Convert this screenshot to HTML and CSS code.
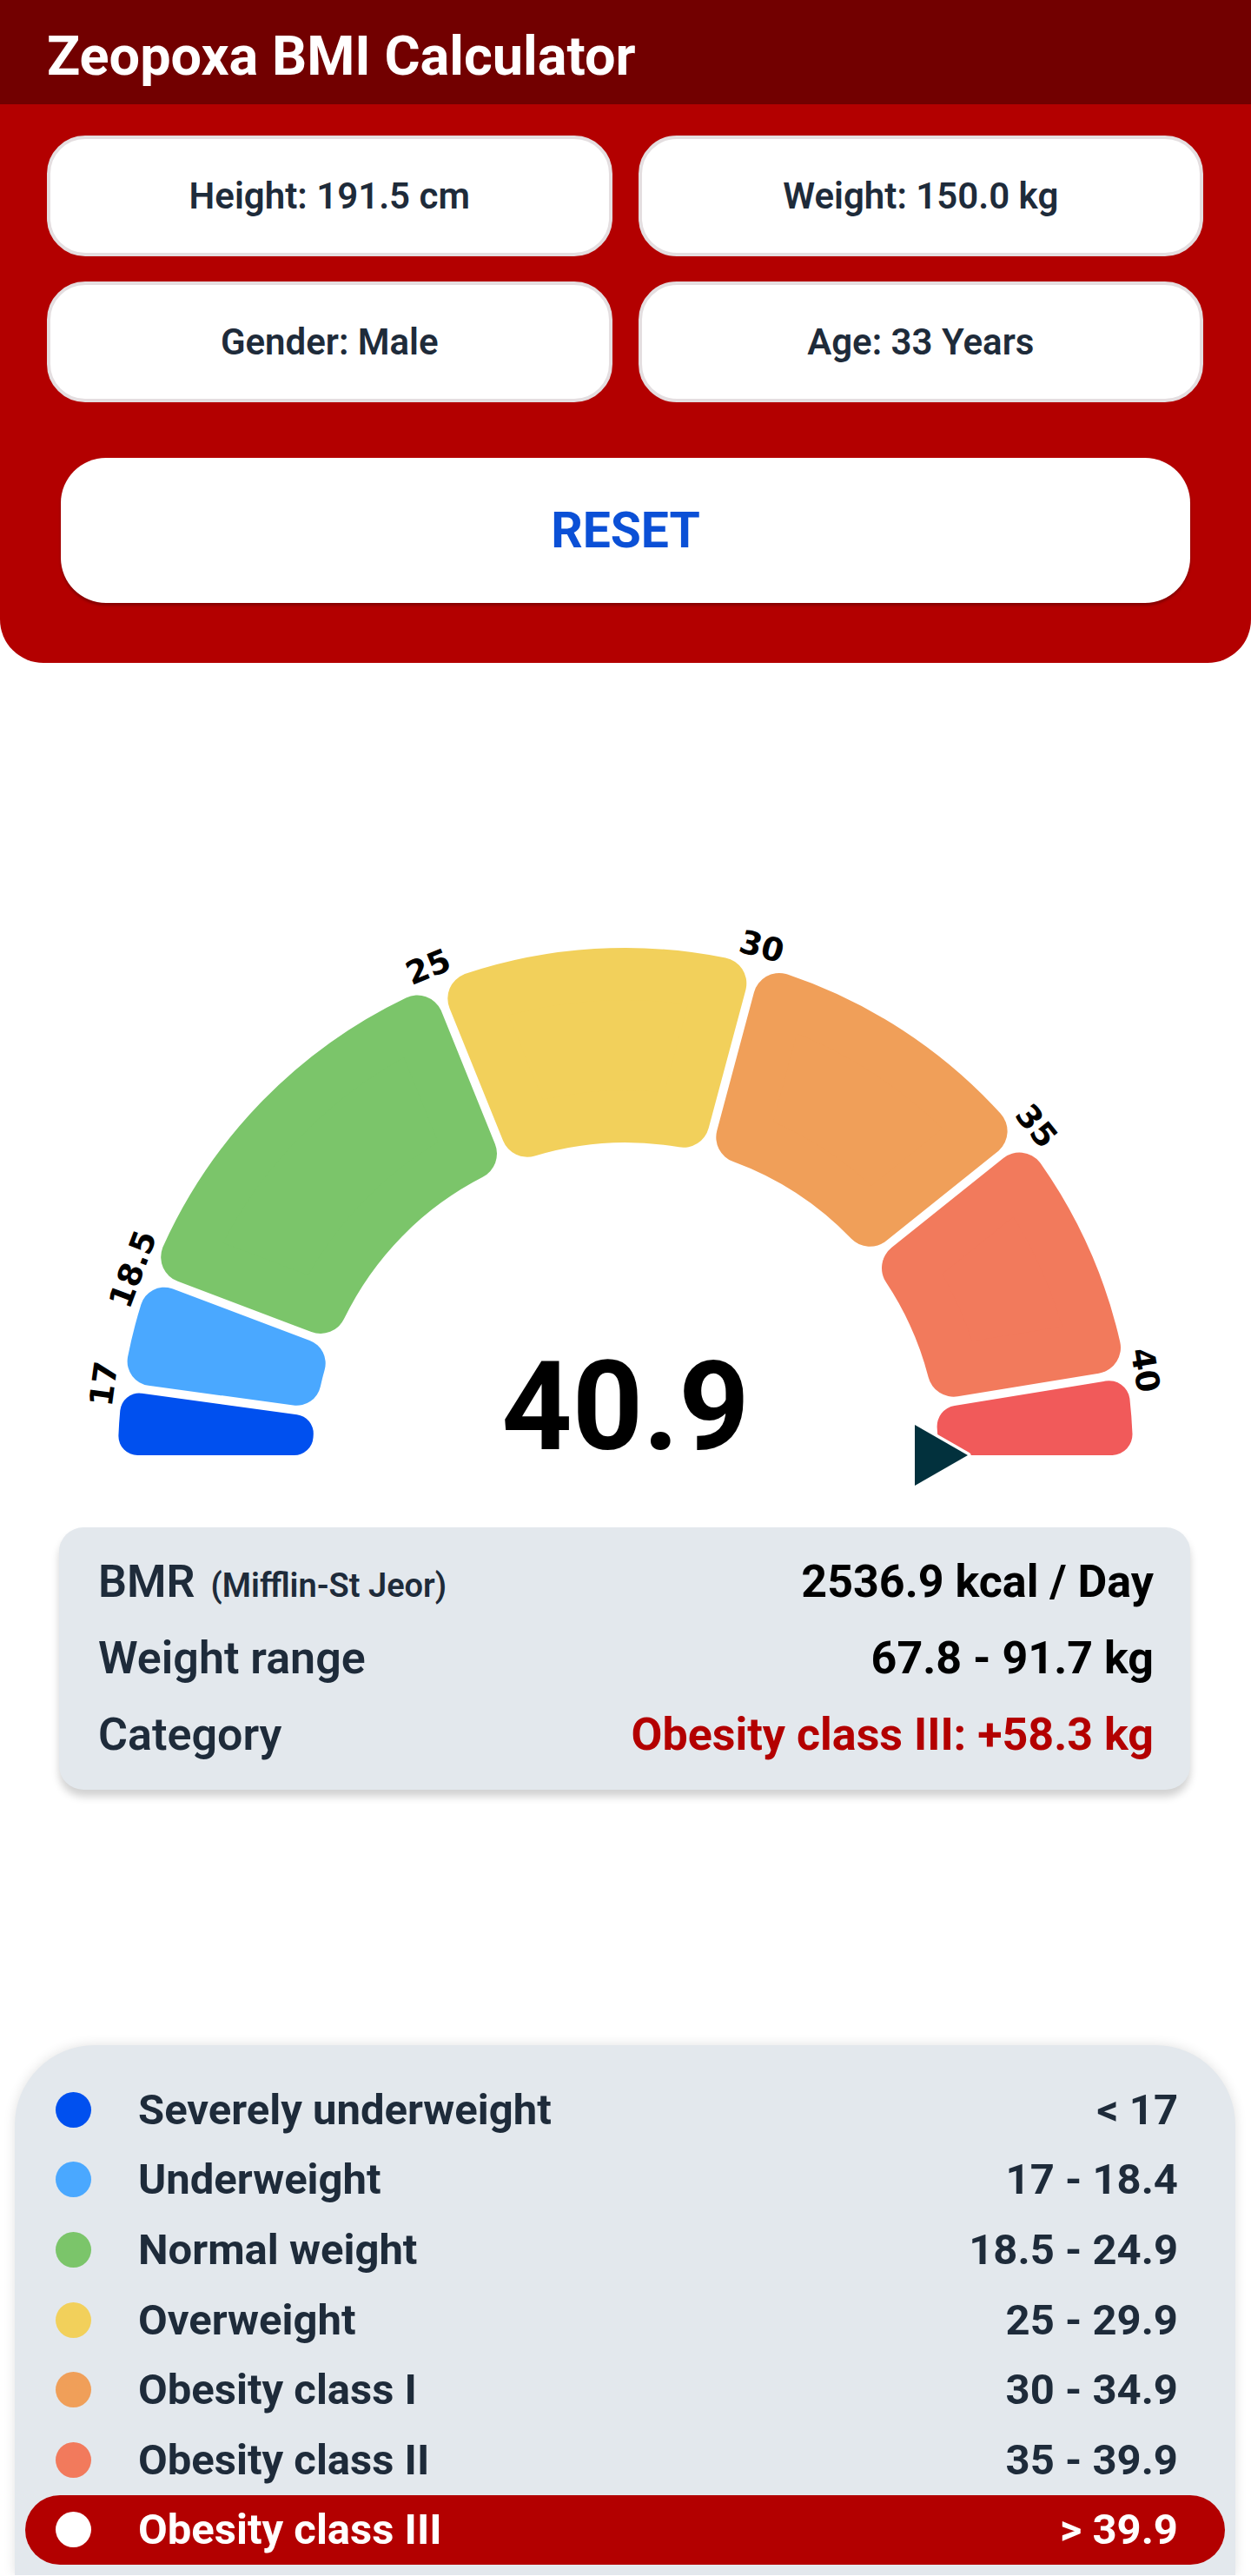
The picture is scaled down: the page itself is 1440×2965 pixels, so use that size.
FILE: index.html
```html
<!DOCTYPE html>
<html lang="en">
<head>
    <meta charset="UTF-8">
    <meta name="viewport" content="width=device-width, initial-scale=1.0">
    <title>Zeopoxa BMI Calculator</title>
    <link rel="stylesheet" href="styles.css">
</head>
<body>

    <header class="app-bar">
        <h1>Zeopoxa BMI Calculator</h1>
    </header>

    <!-- Inputs -->
    <section class="inputs">
        <div class="input-grid">
            <div class="field">Height: 191.5 cm</div>
            <div class="field">Weight: 150.0 kg</div>
            <div class="field">Gender: Male</div>
            <div class="field">Age: 33 Years</div>
        </div>
        <div class="reset">RESET</div>
    </section>

    <!-- Gauge, drawn in page coordinates -->
    <svg class="gauge" viewBox="0 763 1440 977" xmlns="http://www.w3.org/2000/svg">
        <g id="bands"></g>
        <g id="ticks"></g>
        <path class="pointer" d="M1053,1640 L1114,1675 L1053,1710 Z"/>
        <text class="bmi-value" x="720" y="1668">40.9</text>
    </svg>

    <!-- Results -->
    <div class="summary">
        <div class="summary-row">
            <span class="label">BMR<small>(Mifflin-St Jeor)</small></span>
            <span class="value">2536.9 kcal / Day</span>
        </div>
        <div class="summary-row">
            <span class="label">Weight range</span>
            <span class="value">67.8 - 91.7 kg</span>
        </div>
        <div class="summary-row">
            <span class="label">Category</span>
            <span class="value alert">Obesity class III: +58.3 kg</span>
        </div>
    </div>

    <!-- Legend -->
    <ul class="legend">
        <li><span class="dot severe"></span><span class="name">Severely underweight</span><span class="range">&lt; 17</span></li>
        <li><span class="dot under"></span><span class="name">Underweight</span><span class="range">17 - 18.4</span></li>
        <li><span class="dot normal"></span><span class="name">Normal weight</span><span class="range">18.5 - 24.9</span></li>
        <li><span class="dot over"></span><span class="name">Overweight</span><span class="range">25 - 29.9</span></li>
        <li><span class="dot ob1"></span><span class="name">Obesity class I</span><span class="range">30 - 34.9</span></li>
        <li><span class="dot ob2"></span><span class="name">Obesity class II</span><span class="range">35 - 39.9</span></li>
        <li class="current"><span class="dot"></span><span class="name">Obesity class III</span><span class="range">&gt; 39.9</span></li>
    </ul>

    <script src="script.js"></script>
</body>
</html>
```

FILE: styles.css
```css
/* Page */
body {
    margin: 0;
    font-family: Roboto, "Noto Sans", sans-serif;
    background-color: #fff;
    color: #1e2b3a;
}

/* Top bar */
.app-bar {
    height: 120px;
    box-sizing: border-box;
    padding: 8px 0 0 54px;
    background-color: #720000;
    display: flex;
    align-items: center;
}

.app-bar h1 {
    margin: 0;
    font-size: 63px;
    font-weight: 700;
    line-height: 1;
    color: #fff;
}

/* Input panel */
.inputs {
    background-color: #b30000;
    padding: 36px 55px 69px 54px;
    border-radius: 0 0 50px 50px;
}

.input-grid {
    display: grid;
    grid-template-columns: 1fr 1fr;
    gap: 29px 30px;
}

.field {
    height: 139px;
    box-sizing: border-box;
    background-color: #fff;
    border: 4px solid #e4dee0;
    border-radius: 44px;
    display: flex;
    align-items: center;
    justify-content: center;
    font-size: 42px;
    font-weight: 600;
}

.reset {
    margin: 64px 15px 0 16px;
    height: 167px;
    background-color: #fff;
    border-radius: 52px;
    box-shadow: 0 3px 3px rgba(0, 0, 0, 0.25);
    display: flex;
    align-items: center;
    justify-content: center;
    font-size: 57px;
    font-weight: 700;
    color: #0b50d6;
}

/* Gauge */
.gauge {
    display: block;
    width: 1440px;
    height: 977px;
}

.tick {
    font-family: "DejaVu Sans", sans-serif;
    font-size: 37px;
    font-weight: 700;
    fill: #000;
    text-anchor: middle;
    dominant-baseline: central;
}

.bmi-value {
    font-family: Roboto, sans-serif;
    font-size: 142px;
    font-weight: 700;
    fill: #000;
    text-anchor: middle;
}

.pointer {
    fill: #02313d;
    stroke: #fff;
    stroke-width: 7;
    stroke-linejoin: round;
    paint-order: stroke;
}

/* Result card */
.summary {
    margin: 18px 70px 0 68px;
    padding: 19px 42px 19px 45px;
    background-color: #e3e8ed;
    border-radius: 28px;
    box-shadow: 0 8px 10px rgba(0, 0, 0, 0.18);
}

.summary-row {
    display: flex;
    justify-content: space-between;
    align-items: baseline;
    height: 88px;
    line-height: 88px;
    font-size: 52px;
    font-weight: 600;
}

.summary-row small {
    margin-left: 18px;
    font-size: 38px;
    font-weight: 600;
}

.value {
    font-weight: 700;
    color: #000;
}

.value.alert {
    color: #b30000;
}

/* Legend */
.legend {
    list-style: none;
    margin: 294px 18px 0 17px;
    padding: 34px 12px 12px;
    background-color: #e3e8ed;
    border-radius: 92px 92px 0 0;
    box-shadow: 0 0 14px rgba(0, 0, 0, 0.12);
}

.legend li {
    display: flex;
    align-items: center;
    height: 80.6px;
    padding: 0 54px 0 35px;
    font-size: 49px;
    font-weight: 700;
}

.dot {
    width: 41px;
    height: 41px;
    flex-shrink: 0;
    border-radius: 50%;
    margin-right: 54px;
}

.dot.severe { background-color: #0050ef; }
.dot.under  { background-color: #4aa8ff; }
.dot.normal { background-color: #7bc56a; }
.dot.over   { background-color: #f2d05b; }
.dot.ob1    { background-color: #f09f59; }
.dot.ob2    { background-color: #f27a5c; }

.range {
    margin-left: auto;
}

.legend li.current {
    background-color: #b30000;
    color: #fff;
    border-radius: 40px;
}

.legend li.current .dot {
    background-color: #fff;
}
```

FILE: script.js
```js
// Gauge geometry (page px). Angles in degrees from the left end, over the top.
const cx = 720, cy = 1675, outerR = 584, innerR = 360, halfGap = 5;

const bands = [
    { from: 0,     to: 7.8,   color: "#0050ef", corner: 22 },
    { from: 7.8,   to: 20.7,  color: "#4aa8ff", corner: 28 },
    { from: 20.7,  to: 68,    color: "#7bc56a", corner: 30 },
    { from: 68,    to: 105,   color: "#f2d05b", corner: 30 },
    { from: 105,   to: 141.3, color: "#f09f59", corner: 30 },
    { from: 141.3, to: 170.7, color: "#f27a5c", corner: 30 },
    { from: 170.7, to: 180,   color: "#f15a5a", corner: 24 }
];

const ticks = [["17", 7.8], ["18.5", 20.7], ["25", 68], ["30", 105], ["35", 141.3], ["40", 170.7]];

const svgNS = "http://www.w3.org/2000/svg";

function point(r, deg) {
    const a = deg * Math.PI / 180;
    return [(cx - r * Math.cos(a)).toFixed(1), (cy - r * Math.sin(a)).toFixed(1)];
}

// angle shift of a line parallel to a radius, d px away, seen at radius r
function shift(d, r) {
    return Math.asin(d / r) * 180 / Math.PI;
}

const bandGroup = document.getElementById("bands");

bands.forEach(band => {
    const c = band.corner;
    const ro = outerR - c, ri = innerR + c;
    const dA = (band.from === 0 ? 0 : halfGap) + c;
    const dB = (band.to === 180 ? 0 : halfGap) + c;

    const d = "M" + point(ro, band.from + shift(dA, ro)).join(",") +
        " A" + ro + "," + ro + " 0 0 1 " + point(ro, band.to - shift(dB, ro)).join(",") +
        " L" + point(ri, band.to - shift(dB, ri)).join(",") +
        " A" + ri + "," + ri + " 0 0 0 " + point(ri, band.from + shift(dA, ri)).join(",") + " Z";

    // shrunken shape + thick round-joined stroke = rounded corners
    const path = document.createElementNS(svgNS, "path");
    path.setAttribute("d", d);
    path.setAttribute("fill", band.color);
    path.setAttribute("stroke", band.color);
    path.setAttribute("stroke-width", c * 2);
    path.setAttribute("stroke-linejoin", "round");
    bandGroup.appendChild(path);
});

const tickGroup = document.getElementById("ticks");

ticks.forEach(([label, deg]) => {
    const [x, y] = point(606, deg);
    const text = document.createElementNS(svgNS, "text");
    text.setAttribute("x", x);
    text.setAttribute("y", y);
    text.setAttribute("class", "tick");
    text.setAttribute("transform", "rotate(" + (deg - 90) + " " + x + " " + y + ")");
    text.textContent = label;
    tickGroup.appendChild(text);
});
```
